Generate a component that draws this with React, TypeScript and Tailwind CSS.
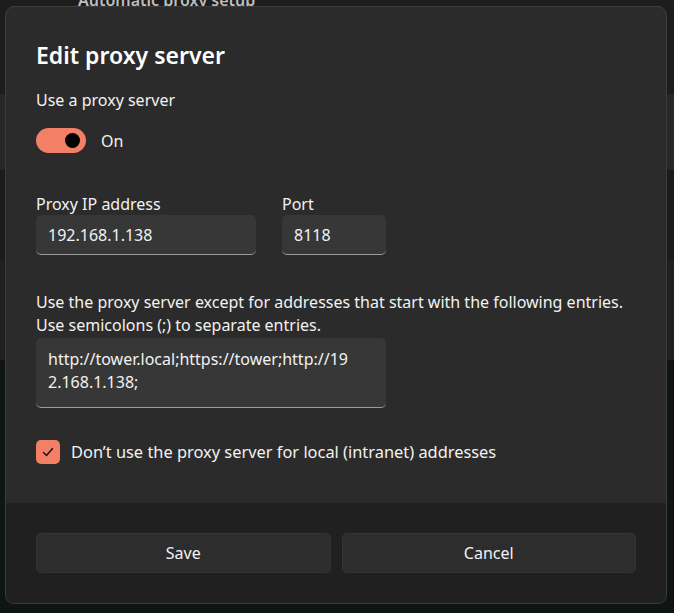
import React from 'react';

const font = { fontFamily: '"Noto Sans", "Open Sans", sans-serif' };

const TextBox = ({ value, className }: { value: string; className: string }) => {
    return (
        <div className={`h-[40px] rounded-[5px] bg-[#373737] border-b border-b-[#9c9c9c] flex items-center px-[12px] text-[16px] text-[#f2f2f2] ${className}`}>
            {value}
        </div>
    );
};

const Background = () => {
    return (
        <div className="flex flex-col">
            <div className="h-[14px] bg-[#1d1d1d] -mt-[6px] pl-[78px] flex items-end">
                <span className="text-[16px] leading-[16px] text-[#bdbdbd] font-semibold">Automatic proxy setup</span>
            </div>
            <div className="h-[86px] bg-[#1c1c1c]" />
            <div className="h-[76px] bg-[#272727]" />
            <div className="h-[90px] bg-[#1b1b1b]" />
            <div className="h-[100px] bg-[#202020]" />
            <div className="flex-1 bg-[#0f1414]" />
        </div>
    );
};

export default function App() {
    return (
        <div className="relative w-[674px] h-[613px] bg-[#0f1414] overflow-hidden" style={font}>
            <Background />

            {/* dialog sits over the settings page */}
            <section className="absolute left-[5px] top-[6px] w-[662px] h-[598px] rounded-[9px] border border-[#3c3c3c] bg-[#2b2b2b] flex flex-col overflow-hidden">
                <div className="flex-1 px-[30px] pt-[32px]">
                    <h2 className="text-[23px] leading-[32px] font-semibold text-white">Edit proxy server</h2>

                    <p className="mt-[18px] text-[16px] leading-[22px] text-[#f2f2f2]">Use a proxy server</p>

                    <div className="mt-[17px] flex items-center gap-[15px]">
                        <div className="w-[50px] h-[25px] rounded-full bg-[#f37f67] flex items-center justify-end pr-[6px]">
                            <div className="w-[15px] h-[15px] rounded-full bg-black" />
                        </div>
                        <span className="text-[16px] text-[#f2f2f2]">On</span>
                    </div>

                    <div className="mt-[40px] flex gap-[26px]">
                        <div className="flex flex-col">
                            <span className="text-[16px] leading-[22px] text-[#f2f2f2]">Proxy IP address</span>
                            <TextBox value="192.168.1.138" className="w-[220px]" />
                        </div>
                        <div className="flex flex-col">
                            <span className="text-[16px] leading-[22px] text-[#f2f2f2]">Port</span>
                            <TextBox value="8118" className="w-[104px]" />
                        </div>
                    </div>

                    <p className="mt-[36px] text-[16px] leading-[23px] text-[#f2f2f2]">
                        Use the proxy server except for addresses that start with the following entries.
                        <br />
                        Use semicolons (;) to separate entries.
                    </p>

                    <div className="mt-[1px] w-[350px] h-[70px] rounded-[5px] bg-[#373737] border-b border-b-[#9c9c9c] px-[12px] pt-[10px] text-[16px] leading-[23px] text-[#f2f2f2]">
                        http://tower.local;https://tower;http://19
                        <br />
                        2.168.1.138;
                    </div>

                    <div className="mt-[32px] flex items-center gap-[11px]">
                        <div className="w-[24px] h-[24px] rounded-[5px] bg-[#f37f67] flex items-center justify-center">
                            <svg width="14" height="14" viewBox="0 0 14 14" fill="none">
                                <path d="M2.5 7.5 L5.5 10.5 L11.5 3.5" stroke="#111" strokeWidth="1.4" strokeLinecap="round" strokeLinejoin="round" />
                            </svg>
                        </div>
                        <span className="text-[16.4px] text-[#f2f2f2]">Don’t use the proxy server for local (intranet) addresses</span>
                    </div>
                </div>

                <div className="bg-[#202020] px-[30px] py-[30px] flex gap-[11px]">
                    <button className="flex-1 h-[40px] rounded-[5px] bg-[#2d2d2d] border border-[#353535] text-[16px] text-[#f2f2f2]">Save</button>
                    <button className="flex-1 h-[40px] rounded-[5px] bg-[#2d2d2d] border border-[#353535] text-[16px] text-[#f2f2f2]">Cancel</button>
                </div>
            </section>
        </div>
    );
}
